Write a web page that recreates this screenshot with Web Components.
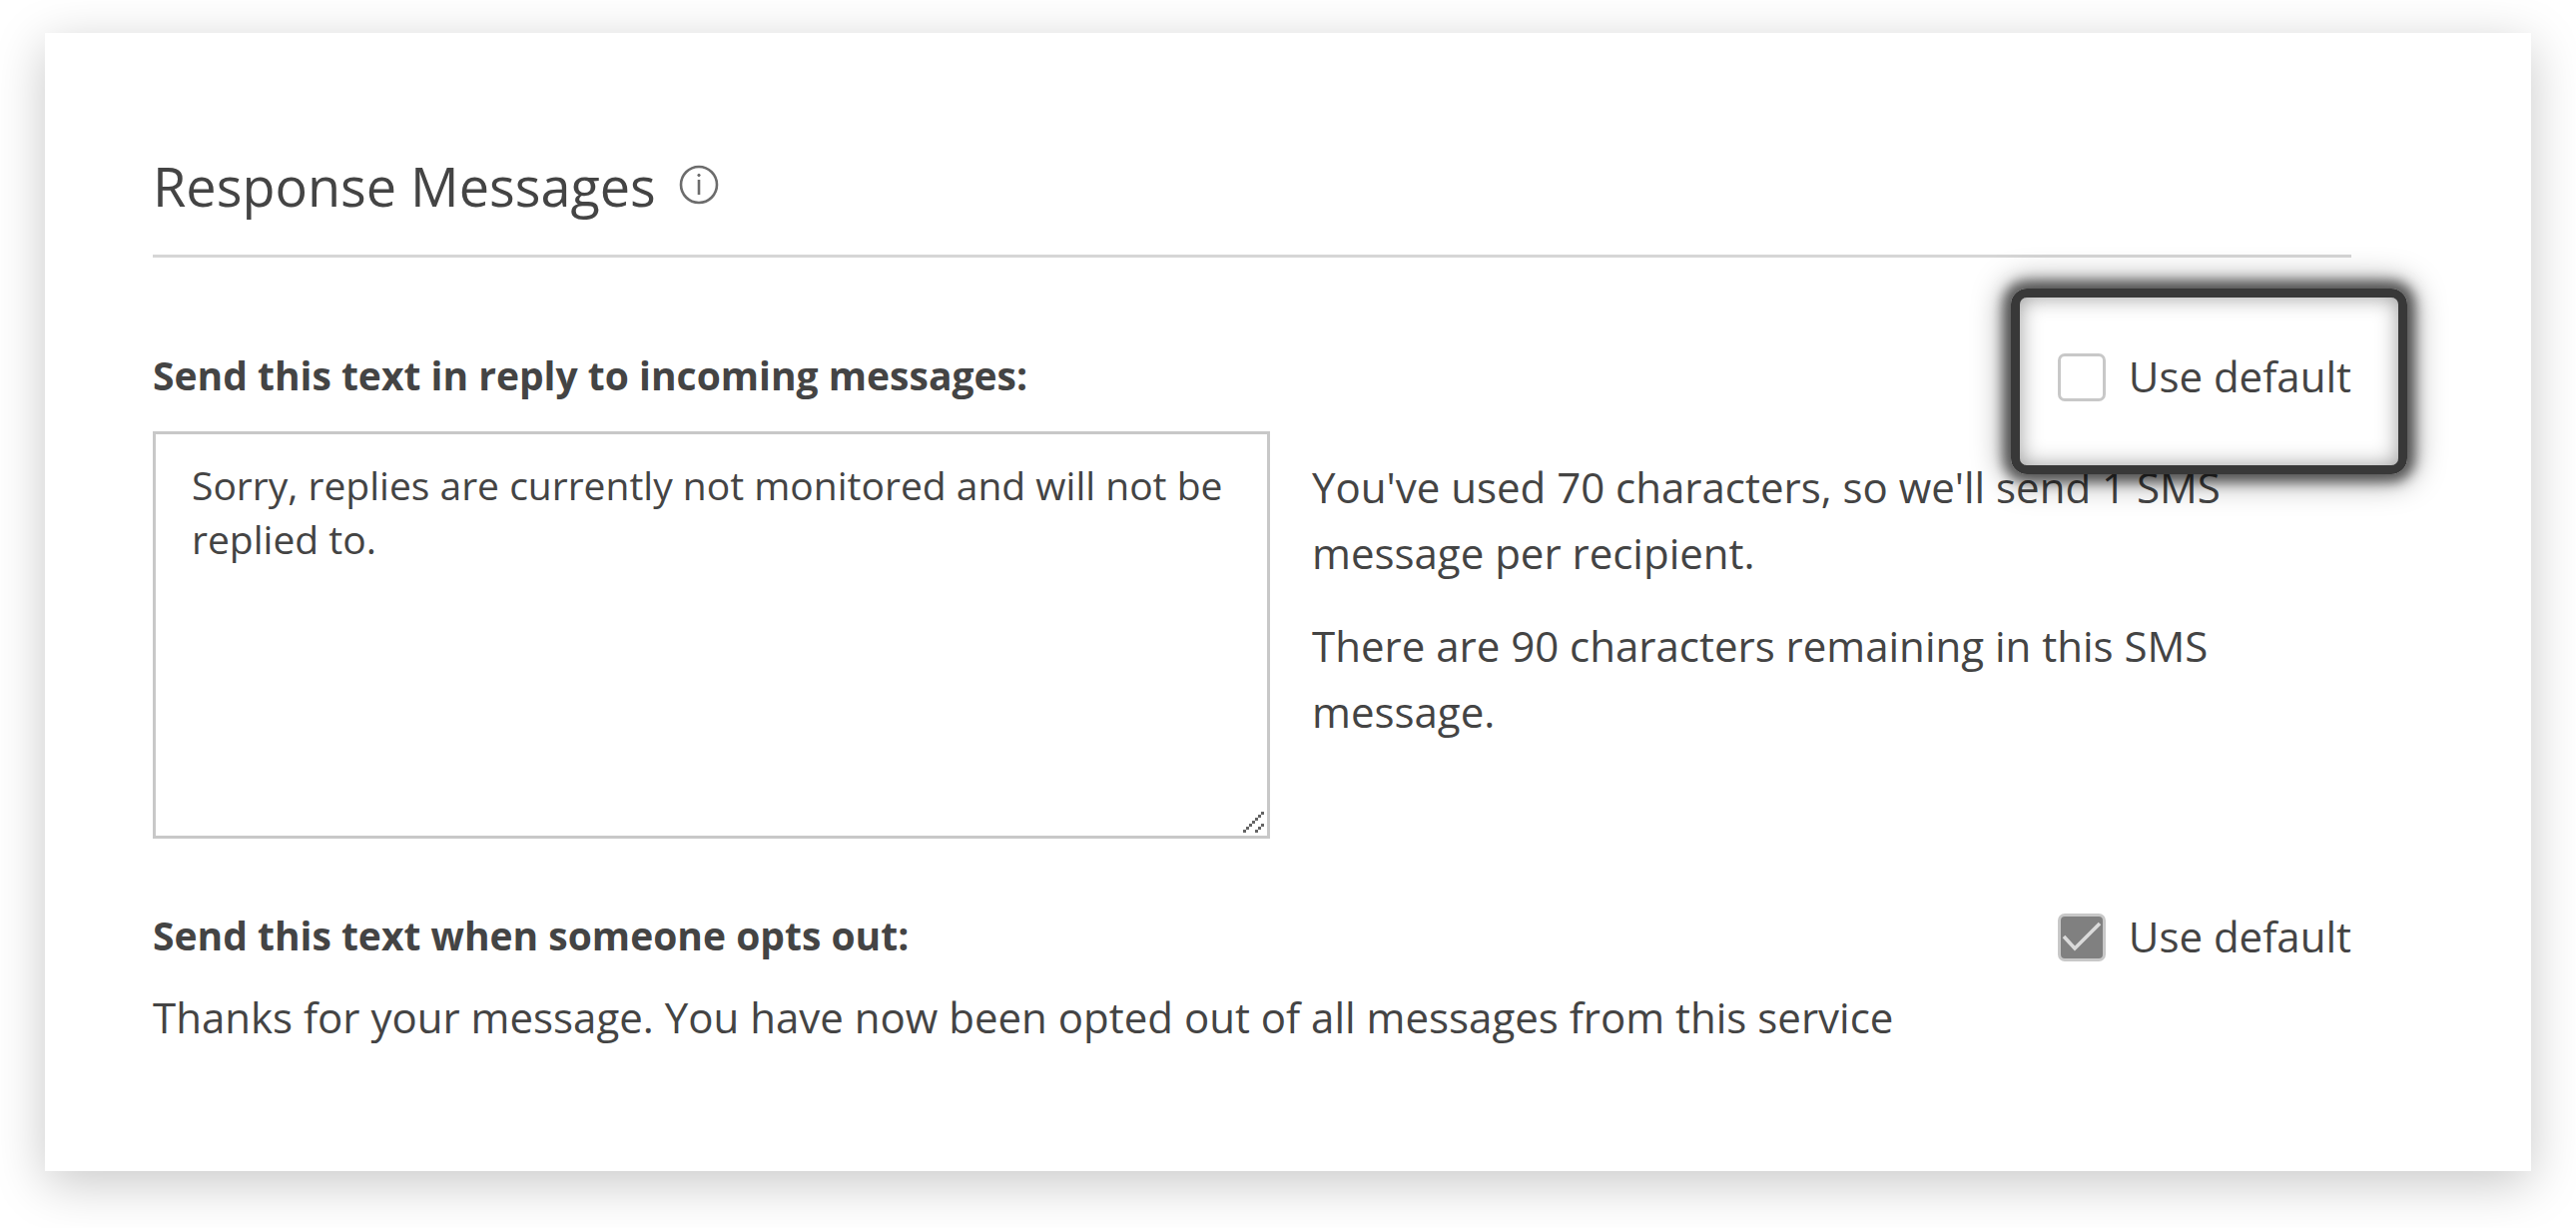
<!DOCTYPE html>
<html lang="en">
<head>
<meta charset="utf-8">
<meta name="viewport" content="width=device-width, initial-scale=1">
<title>Response Messages</title>
<style>
  body { margin: 0; background: #fff; color: #444; font-family: "Open Sans", "Noto Sans", sans-serif; font-size: 42px; line-height: 66px; }
</style>
</head>
<body>
<settings-card>
  <section-heading>Response Messages</section-heading>
  <message-setting label="Send this text in reply to incoming messages:" highlighted>
    <message-editor>
      <p>You've used 70 characters, so we'll send 1 SMS message per recipient.</p>
      <p>There are 90 characters remaining in this SMS message.</p>
    </message-editor>
  </message-setting>
  <message-setting label="Send this text when someone opts out:" default-on>
    <div>Thanks for your message. You have now been opted out of all messages from this service</div>
  </message-setting>
</settings-card>
<script>
  class ShadowElement extends HTMLElement {
    connectedCallback() {
      if (this.shadowRoot) return;
      this.attachShadow({ mode: 'open' }).innerHTML =
        '<style>*{box-sizing:border-box}</style>' + this.render();
    }
  }

  customElements.define('settings-card', class extends ShadowElement {
    render() {
      return `<style>
        :host { display: block; padding: 33px 45px 57px; }
        main { padding: 116px 180px 121px 108px; background: #fff; box-shadow: 0 12px 48px rgba(0,0,0,.22); }
      </style><main><slot></slot></main>`;
    }
  });

  customElements.define('section-heading', class extends ShadowElement {
    render() {
      return `<style>
        :host { display: block; }
        header { display: flex; align-items: center; gap: 22px; padding-bottom: 31px; border-bottom: 3px solid #d6d6d6; }
        h2 { margin: 0; font-size: 54px; line-height: 75px; font-weight: 400; }
        button { display: flex; padding: 0 0 4px; border: 0; background: none; color: #6c6c6c; }
      </style>
      <header><h2><slot></slot></h2>
      <button type="button" aria-label="More information">
        <svg width="42" height="42" viewBox="0 0 42 42" fill="none" stroke="currentColor" stroke-width="2.6">
          <circle cx="21" cy="21" r="18"/><path d="M21 16v15"/><circle cx="21" cy="11.5" r="1.2" fill="currentColor" stroke-width="1"/>
        </svg>
      </button></header>`;
    }
  });

  customElements.define('default-toggle', class extends ShadowElement {
    render() {
      return `<style>
        :host { display: block; position: relative; }
        label { display: flex; align-items: center; gap: 23px; line-height: 64px; }
        .text { padding-bottom: 2px; }
        .box { display: grid; }
        .box > * { grid-area: 1 / 1; }
        input { appearance: none; width: 48px; height: 48px; margin: 0; border: 3px solid #c8c8c8; border-radius: 7px; background: #fff; }
        input:checked { background: #808080; }
        svg { pointer-events: none; visibility: hidden; }
        input:checked + svg { visibility: visible; }
        .ring { display: none; position: absolute; inset: -56px -56px -64px -47px; border: 9px solid #383838; border-radius: 16px; pointer-events: none;
          box-shadow: 0 0 12px 8px rgba(0,0,0,.55), 0 0 30px 9px rgba(0,0,0,.35), inset 0 0 21px rgba(0,0,0,.4); }
        :host([highlighted]) .ring { display: block; }
      </style>
      <label><span class="box"><input type="checkbox" ${this.hasAttribute('checked') ? 'checked' : ''}>
        <svg width="48" height="48" viewBox="0 0 48 48" fill="none" stroke="#dadada" stroke-width="3.6"><path d="M6 23L17 35L42 10"/></svg></span>
        <span class="text">Use default</span></label>
      <div class="ring"></div>`;
    }
  });

  customElements.define('message-setting', class extends ShadowElement {
    render() {
      return `<style>
        :host { display: block; padding-top: 87px; }
        :host([default-on]) { padding-top: 66px; }
        .bar { display: flex; justify-content: space-between; align-items: center; }
        h3 { margin: 0; padding-bottom: 4px; font-size: 39px; line-height: 62px; font-weight: 700; }
        .body { padding-top: 21px; }
        :host([default-on]) .body { padding-top: 14px; }
      </style>
      <div class="bar"><h3>${this.getAttribute('label')}</h3>
        <default-toggle ${this.hasAttribute('highlighted') ? 'highlighted' : ''} ${this.hasAttribute('default-on') ? 'checked' : ''}></default-toggle></div>
      <div class="body"><slot></slot></div>`;
    }
  });

  customElements.define('message-editor', class extends ShadowElement {
    render() {
      return `<style>
        :host { display: flex; gap: 42px; }
        .field { position: relative; flex: 1119 1 0; display: flex; }
        textarea { width: 100%; height: 408px; padding: 24px 36px; border: 3px solid #c8c8c8; border-radius: 0; background: #fff; color: inherit; font-family: inherit; font-size: 39px; line-height: 54px; resize: none; }
        svg { position: absolute; right: 6px; bottom: 6px; }
        .notes { flex: 1041 1 0; display: flex; flex-direction: column; gap: 27px; padding-top: 23px; }
        ::slotted(p) { margin: 0; }
      </style>
      <div class="field"><textarea aria-label="Reply text">Sorry, replies are currently not monitored and will not be replied to.</textarea>
        <svg width="21" height="21" viewBox="0 0 7 7" fill="#646464" shape-rendering="crispEdges"><path d="M0 6h1v1H0zM1 5h1v1H1zM2 4h1v1H2zM3 3h1v1H3zM4 2h1v1H4zM5 1h1v1H5zM6 0h1v1H6zM4 6h1v1H4zM5 5h1v1H5zM6 4h1v1H6z"/></svg></div>
      <div class="notes"><slot></slot></div>`;
    }
  });
</script>
</body>
</html>
